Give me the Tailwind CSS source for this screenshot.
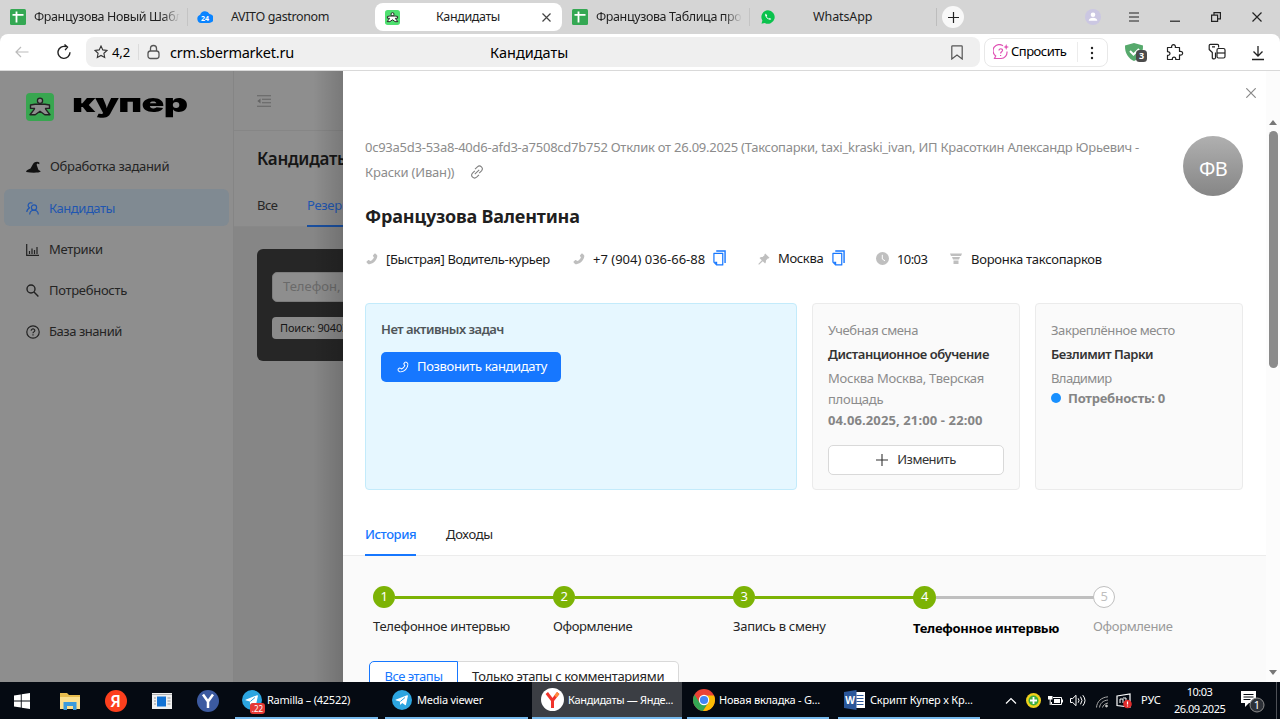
<!DOCTYPE html>
<html lang="ru">
<head>
<meta charset="utf-8">
<title>Кандидаты</title>
<script src="https://cdn.jsdelivr.net/npm/@tailwindcss/browser@4"></script>
</head>
<body class="w-[1280px] h-[719px] overflow-hidden font-['Noto_Sans','Open_Sans',sans-serif] text-[13px] tracking-[-0.3px] text-[#262626] whitespace-nowrap flex flex-col bg-[#d5d5d5]">
<svg class="hidden">
  <symbol id="sheet" viewBox="0 0 16 16"><rect width="16" height="16" rx="1.5" fill="#34a853"/><path d="M2.500 5.800h11M6.500 2.500v11" stroke="#fff" stroke-width="1.800"/></symbol>
  <symbol id="man" viewBox="0 0 28 28"><rect width="28" height="28" rx="5" fill="#4fe070"/><circle cx="14" cy="7.800" r="2.800" fill="#fff" stroke="#222" stroke-width="1.800"/><path d="m4.500 12 4.500-.7h10l4.500.7v3.400h-4l.3 1 4.200 5.300h-5.200L14 18.200l-4.800 3.500H4l4.200-5.300.3-1h-4z" fill="#fff" stroke="#222" stroke-width="1.800" stroke-linejoin="round"/></symbol>
  <symbol id="phone" viewBox="0 0 14 14"><path d="M9.800.8c.4-.4 1-.4 1.400 0l1.500 1.500c.4.500.6 1 .5 1.600C12.600 8.600 9 12.300 4 13.200c-.7.100-1.200-.1-1.600-.5L.8 11.200c-.4-.4-.4-1 0-1.400l1.600-1.400c.4-.3.900-.3 1.300 0l1.500 1c1.800-.8 3.300-2.300 4.100-4.100l-1-1.500c-.3-.4-.3-.9 0-1.300z"/></symbol>
  <symbol id="copy" viewBox="0 0 14 17"><path d="M3.500 1h9.500v13" fill="none" stroke="#1677ff" stroke-width="1.500"/><path d="M1 3.500h9.500v12.500H4L1 13z" fill="#fff" stroke="#1677ff" stroke-width="1.300" stroke-linejoin="round"/><path d="M1.500 12.500H4.500V16z" fill="#1677ff"/></symbol>
  <symbol id="tg" viewBox="0 0 20 20"><circle cx="10" cy="10" r="10" fill="#2ca5e0"/><path d="M3.500 9.800 15 5.200c.6-.2 1 .1.900.8l-1.900 8.700c-.1.600-.6.700-1 .4l-2.800-2-1.500 1.400c-.3.300-.6.200-.6-.2l-.2-2.700-3.600-1c-.9-.2-.8-.6-.8-.8z" fill="#fff"/><path d="m8.300 11.500 4.700-4" stroke="#2ca5e0" stroke-width="1"/></symbol>
</svg>

<!-- Tab strip -->
<div class="h-[34px] flex items-center text-[12.500px] text-[#1f1f1f] shrink-0">
  <svg class="w-4 h-4 ml-[10px]"><use href="#sheet"/></svg>
  <div class="ml-2 w-[146px] overflow-hidden tracking-[-0.38px] [mask-image:linear-gradient(90deg,#000_88%,transparent)]">Французова Новый Шабл</div>
  <div class="w-px h-[18px] ml-[7px] bg-[#c4c4c4]"></div>
  <svg class="w-4 h-4 ml-[9px]" viewBox="0 0 16 16"><path d="M4 14a4.300 4.300 0 0 1-.8-8.300 5 5 0 0 1 9.300-.7A4.500 4.500 0 0 1 12 14z" fill="#0a84ff"/><text x="8" y="11.500" font-size="7" font-weight="700" fill="#fff" text-anchor="middle" letter-spacing="0">24</text></svg>
  <div class="ml-[18px] w-[144px] tracking-[-0.37px]">AVITO gastronom</div>
  <div class="w-[187px] h-[28px] bg-white rounded-[8px] flex items-center">
    <svg class="w-[15px] h-[15px] ml-[10px]"><use href="#man"/></svg>
    <div class="ml-[36px] w-[106px] tracking-[-0.38px]">Кандидаты</div>
    <svg class="w-[9px] h-[9px]" viewBox="0 0 9 9" stroke="#444" stroke-width="1.200"><path d="m.5.5 8 8m0-8-8 8"/></svg>
  </div>
  <svg class="w-4 h-4 ml-[10px]"><use href="#sheet"/></svg>
  <div class="ml-2 w-[146px] overflow-hidden tracking-[-0.38px] [mask-image:linear-gradient(90deg,#000_88%,transparent)]">Французова Таблица про</div>
  <div class="w-px h-[18px] ml-[7px] bg-[#c4c4c4]"></div>
  <svg class="w-[14px] h-[14px] ml-[11px]" viewBox="0 0 14 14"><path d="M7 .3A6.700 6.700 0 1 1 3.800 12.900L.5 13.700l.9-3.200A6.700 6.700 0 0 1 7 .3z" fill="#0bc24d"/><path d="M4.900 3.600c-1.500 1-.6 3 .9 4.500s3.600 2.500 4.500.9l-1.600-1-.8.800C6.800 8.300 6 7.500 5.500 6.500l.7-.8z" fill="#fff"/></svg>
  <div class="ml-[38px] w-[123px] tracking-[-0.1px]">WhatsApp</div>
  <div class="w-px h-[18px] bg-[#bdbdbd]"></div>
  <div class="w-[22px] h-[22px] ml-[5px] rounded-full bg-[#f8f8f8] flex items-center justify-center"><svg class="w-[11px] h-[11px]" viewBox="0 0 11 11" stroke="#222" stroke-width="1.200"><path d="M5.500 0v11M0 5.500h11"/></svg></div>
  <svg class="w-4 h-4 ml-[121px]" viewBox="0 0 16 16"><circle cx="8" cy="8" r="8" fill="#cbc7e2"/><circle cx="8" cy="5.700" r="2.300" fill="#fff"/><path d="M3.700 11.800c0-4 8.600-4 8.600 0z" fill="#fff"/></svg>
  <svg class="w-[10px] h-[10px] ml-[28px]" viewBox="0 0 10 10" stroke="#222" stroke-width="1.200"><path d="M0 1h10M0 5h10M0 9h10"/></svg>
  <svg class="w-[10px] h-[10px] ml-[31px]" viewBox="0 0 10 10" stroke="#222" stroke-width="1.200"><path d="M0 9.200h10"/></svg>
  <svg class="w-[10px] h-[10px] ml-[31px]" viewBox="0 0 10 10" fill="none" stroke="#222" stroke-width="1.200"><path d="M.6 3.200h6v6.200h-6zM3 3V.6h6.400v6.200H7"/></svg>
  <svg class="w-[10px] h-[10px] ml-[31px]" viewBox="0 0 10 10" stroke="#222" stroke-width="1.200"><path d="m.5.5 9 9m0-9-9 9"/></svg>
</div>

<!-- Address bar -->
<div class="h-[37px] bg-white rounded-t-[8px] flex items-center border-b border-[#d9d9d9] text-black shrink-0">
  <svg class="w-[14px] h-[12px] ml-[15px]" viewBox="0 0 14 12" fill="none" stroke="#bbb" stroke-width="1.200"><path d="M13.500 6H1m5-5L1 6l5 5"/></svg>
  <svg class="w-[16px] h-[16px] ml-[27px]" viewBox="0 0 16 16" fill="none" stroke="#222" stroke-width="1.400"><path d="M14 8.300A6 6 0 1 1 10 2.700M8.500.5l3 2.600-2.400 3"/></svg>
  <div class="ml-[14px] w-[894px] h-[30px] rounded-[8px] bg-[#efefef] flex items-center">
    <svg class="w-[14px] h-[14px] ml-[8px]" viewBox="0 0 14 14" fill="none" stroke="#333" stroke-width="1.100"><path d="m7 1 1.800 3.900 4.200.5-3.100 2.900.8 4.200L7 10.400l-3.700 2.100.8-4.200L1 5.400l4.200-.5z"/></svg>
    <div class="ml-[4px] w-[26px] pt-[2px] tracking-[-0.1px]">4,2</div>
    <div class="w-px h-4 bg-[#dcdcdc]"></div>
    <svg class="w-[13px] h-[16px] ml-[8px]" viewBox="0 0 13 16" fill="none" stroke="#555" stroke-width="1.300"><rect x="1" y="7" width="11" height="7.500" rx="2.500"/><path d="M3.500 7V4.500a3 3 0 0 1 6 0V7"/></svg>
    <div class="ml-[10px] pt-[1px] text-[14.500px] w-[320px] tracking-[-0.25px]">crm.sbermarket.ru</div>
    <div class="text-[14.500px] pt-[1px] tracking-[0px] w-[461px]">Кандидаты</div>
    <svg class="w-[12px] h-[15px]" viewBox="0 0 12 15" fill="none" stroke="#555" stroke-width="1.200"><path d="M.8 1.500q0-.7.700-.7h9q.7 0 .7.700V14L6 10 .8 14z"/></svg>
  </div>
  <div class="ml-[4px] w-[124px] h-[29px] rounded-[8px] border border-[#e8e8e8] flex items-center shrink-0">
    <svg class="w-[16px] h-[16px] ml-[8px]" viewBox="0 0 16 16" fill="none" stroke="#e052b4" stroke-width="1.200"><path d="M10 1.700A6.300 6.300 0 0 0 2.700 12L1.500 14.500H8A6.300 6.300 0 0 0 14 7.500"/><path d="M6 6.500c0-2.400 3.800-2.200 3.500 0-.2 1.300-1.900 1.400-1.900 3M7.600 11v.9"/><path d="M13.200 0 14 2.300l2 .7-2 .8-.8 2.200-.8-2.200-2-.8 2-.7z" fill="#e052b4" stroke="none"/></svg>
    <div class="ml-[2px] w-[66px] text-[13px] tracking-[-0.5px]">Спросить</div>
    <div class="w-px h-5 bg-[#ececec]"></div>
    <svg class="w-[4px] h-[14px] ml-[12px] mt-[2px]" viewBox="0 0 4 14" fill="#222"><circle cx="2" cy="2" r="1.200"/><circle cx="2" cy="7" r="1.200"/><circle cx="2" cy="12" r="1.200"/></svg>
  </div>
  <svg class="w-[24px] h-[21px] ml-[16px] shrink-0" viewBox="0 0 24 21"><path d="M1 3.500 10 1l9 2.500c.3 8-3.500 13-9 15.500C4.500 16.500.7 11.500 1 3.500z" fill="#56a96c"/><path d="m6 9 3.500 3.500L15 7" stroke="#fff" stroke-width="2" fill="none"/><rect x="12" y="8" width="11" height="12" rx="3.500" fill="#4b4b4b"/><text x="17.500" y="17.300" font-size="9" font-weight="700" fill="#fff" text-anchor="middle" letter-spacing="0">3</text></svg>
  <svg class="w-[18px] h-[18px] ml-[18px] shrink-0" viewBox="0 0 18 18" fill="none" stroke="#222" stroke-width="1.200" stroke-linejoin="round"><path d="M1.500 4.500h4.200c-1-3.800 4.600-3.800 3.600 0h4.200v4c4.200-1 4.200 4.400 0 3.400v4.600H9.700c.7-3.300-4-3.300-3.300 0H1.500v-4.200c3.300.4 3.300-3.800 0-3.600z"/></svg>
  <svg class="w-[18px] h-[18px] ml-[24px] shrink-0" viewBox="0 0 18 18" fill="none" stroke="#222" stroke-width="1.200" stroke-linejoin="round"><path d="M7.500 9.500v5.500q-1.500 2-3.200 0V9.500L1.200 6.500V2.500q0-1.200 1.200-1.200h7q1.200 0 1.200 1.200V4.500M4 3.800h3"/><rect x="9" y="5.500" width="8" height="9.500" rx="1.500"/><path d="M9 10h8"/></svg>
  <svg class="w-[14px] h-[16px] ml-[25px] mt-[2px] shrink-0" viewBox="0 0 14 16" fill="none" stroke="#222" stroke-width="1.300"><path d="M7 1v9.500M2.500 6.500 7 11l4.500-4.500M1 14.500h12"/></svg>
</div>

<!-- Page -->
<div class="h-[611px] flex shrink-0">
  <aside class="w-[234px] bg-[#8e8e8e] border-r border-[#858585] shrink-0 text-[#242424]">
    <div class="h-[75px] flex items-start pt-[22px] pl-[26px]">
      <svg class="w-[28px] h-[28px]" viewBox="0 0 28 28"><rect width="28" height="28" rx="4" fill="#38a650"/><circle cx="14" cy="7.800" r="2.600" fill="#8e8e8e" stroke="#222" stroke-width="1.300"/><path d="m4.500 12 4.500-.7h10l4.500.7v3.400h-4l.3 1 4.200 5.300h-5.200L14 18.200l-4.800 3.500H4l4.200-5.300.3-1h-4z" fill="#8e8e8e" stroke="#222" stroke-width="1.400" stroke-linejoin="round"/></svg>
      <div class="ml-[18px] -mt-[6px] font-['Inter',sans-serif] font-black text-[26px] leading-[32px] tracking-[-0.500px] text-black origin-left scale-x-[1.45]">купер</div>
    </div>
    <div class="flex flex-col gap-[4px] px-[4px]">
      <div class="h-[37px] mt-[2px] pt-px flex items-center pl-[22px]">
        <svg class="w-[15px] h-[12px]" viewBox="0 0 15 12" fill="#111"><path d="M4.500 7.500 7 3c1.500-2.500 5-3 6.500-1.200l-.3 1.400-2-.7-.6 1.200 1.700 4.800c.5 1.500 2.200.8 2.400 2-1.500 1.400-9 1.500-14.400.5-.8-1 1.400-2.500 4.200-3.500z"/></svg>
        <span class="ml-[9px]">Обработка заданий</span>
      </div>
      <div class="h-[37px] pt-[2px] flex items-center pl-[22px] rounded-[6px] bg-[#808a92] text-[#1f56b0]">
        <svg class="w-[13px] h-[13px]" viewBox="0 0 13 13" fill="none" stroke="#1f56b0" stroke-width="1.200"><circle cx="8" cy="5.500" r="2.600"/><path d="M3.700 12.500c.2-5.700 8.400-5.700 8.600 0M6.500 1.300A2.700 2.700 0 1 0 4 6M.8 10c.1-2 1-3.300 2.600-3.900"/></svg>
        <span class="ml-[10px] tracking-[-0.45px]">Кандидаты</span>
      </div>
      <div class="h-[37px] pt-[2px] flex items-center pl-[22px]">
        <svg class="w-[13px] h-[12px]" viewBox="0 0 13 12" fill="none" stroke="#222" stroke-width="1.200"><path d="M.7 0v11.300H13M3.500 10V7m2.500 3V4.500M8.500 10V6M11 10V3"/></svg>
        <span class="ml-[10px] tracking-[-0.3px]">Метрики</span>
      </div>
      <div class="h-[37px] pt-[2px] flex items-center pl-[22px]">
        <svg class="w-[13px] h-[13px]" viewBox="0 0 13 13" fill="none" stroke="#222" stroke-width="1.400"><circle cx="5" cy="5" r="4"/><path d="m8 8 4.400 4.400"/></svg>
        <span class="ml-[10px]">Потребность</span>
      </div>
      <div class="h-[37px] pt-[2px] flex items-center pl-[22px]">
        <svg class="w-[14px] h-[14px]" viewBox="0 0 14 14" fill="none" stroke="#222" stroke-width="1.200"><circle cx="7" cy="7" r="6.200"/><path d="M5.200 5.700c0-2.400 3.700-2.300 3.600 0-.1 1.200-1.800 1.200-1.800 2.500M7 9.300v1.200"/></svg>
        <span class="ml-[9px] tracking-[-0.45px]">База знаний</span>
      </div>
    </div>
  </aside>

  <main class="w-[109px] bg-[#868686] overflow-hidden shrink-0 relative">
    <div class="h-[60px] bg-[#8e8e8e] border-b border-[#868686] flex items-center pl-[23px]">
      <svg class="w-[14px] h-[12px]" viewBox="0 0 14 12" fill="none" stroke="#646464" stroke-width="1.100"><path d="M0 .8h14M5 4.300h9M5 7.800h9M0 11.200h14"/><path d="M3.500 3.500v5L.3 6z" fill="#646464" stroke="none"/></svg>
    </div>
    <div class="h-[96px] bg-[#8e8e8e] pl-[23px] border-b border-[#888]">
      <div class="h-[54px] pt-px flex items-center text-[17px] font-semibold tracking-[-0.3px] text-[#161616]">Кандидаты</div>
      <div class="flex h-[42px]">
        <div class="w-[50px] h-[42px] leading-[40px] shrink-0 tracking-[-0.5px]">Все</div>
        <div class="h-[42px] leading-[40px] border-b-2 border-[#1a4f9e] text-[#1f56b0]">Резерв</div>
      </div>
    </div>
    <div class="ml-[23px] mt-[22px] w-[200px] h-[112px] rounded-[6px] bg-[#262626] pl-[15px] pt-[23px]">
      <div class="h-[30px] rounded-[5px] bg-[#8e8e8e] border border-[#7d7d7d] pl-[10px] flex items-center text-[#6a6a6a] tracking-normal">Телефон, ФИО</div>
      <div class="mt-[15px] h-[22px] rounded-[4px] bg-[#8a8a8a] pl-[8px] flex items-center text-[11px] tracking-[-0.150px] text-[#161616]">Поиск: 9040366688</div>
    </div>
    <div class="absolute inset-y-0 right-0 w-[30px] bg-linear-to-r from-transparent to-black/15"></div>
  </main>

  <!-- Candidate drawer -->
  <section class="w-[937px] bg-white flex shrink-0">
    <div class="w-[923px] h-[611px] overflow-hidden pt-[64px]">
      <div class="flex pl-[22px]">
        <div class="w-[818px]">
          <div class="leading-[25px] text-[#8c8c8c] tracking-[-0.25px]">0c93a5d3-53a8-40d6-afd3-a7508cd7b752 Отклик от 26.09.2025 (Таксопарки, taxi_kraski_ivan, ИП Красоткин Александр Юрьевич -</div>
          <div class="leading-[25px] text-[#8c8c8c] flex items-center"><span class="tracking-[-0.2px]">Краски (Иван))</span>
            <svg class="w-[14px] h-[14px] ml-[16px] -mt-[2px]" viewBox="0 0 14 14" fill="none" stroke="#808080" stroke-width="1.100"><path d="M5 4.200 7.400 1.800c2.700-2.500 6.600 1.200 4.100 4L9.200 8.100M9 9.800l-2.400 2.400C3.900 14.700 0 11 2.500 8.200l2.300-2.300M4.800 9.200l4.400-4.400"/></svg></div>
        </div>
        <div class="w-[60px] h-[60px] mt-[1px] rounded-full bg-linear-to-b from-[#b0b0b0] to-[#868686] flex items-center justify-center text-white text-[20px] tracking-[-0.67px] pt-[5px]">ФВ</div>
      </div>
      <div class="pl-[22px] h-[40px] flex items-center text-[18px] font-bold tracking-[-0.2px] text-[#1f1f1f]">Французова Валентина</div>
      <div class="pl-[23px] h-[28px] mt-[9px] flex items-center text-[#1a1a1a]">
        <svg class="w-[12px] h-[12px] -mt-px shrink-0" fill="#bfbfbf" viewBox="0 0 14 14"><use href="#phone"/></svg>
        <span class="ml-[8px] w-[187px] pt-px tracking-[-0.34px]">[Быстрая] Водитель-курьер</span>
        <svg class="w-[12px] h-[12px] -mt-px shrink-0" fill="#bfbfbf" viewBox="0 0 14 14"><use href="#phone"/></svg>
        <span class="ml-[8px] w-[120px] pt-px tracking-[0px]">+7 (904) 036-66-88</span>
        <svg class="w-[13px] h-[16px] -mt-[3px] shrink-0"><use href="#copy"/></svg>
        <svg class="w-[12px] h-[12px] ml-[32px] shrink-0" viewBox="0 0 12 12" fill="#bfbfbf"><path d="m7.200.5 4.300 4.300-1 .8-.7-.1-1.900 2c.2 1.200 0 2.100-.8 3L4.800 8.200 1 11.700l-.7-.7L3.800 7.200 1.500 4.900c.9-.8 1.800-1 3-.8l2-1.900-.1-.7z"/></svg>
        <span class="ml-[8px] w-[54px] tracking-[-0.35px]">Москва</span>
        <svg class="w-[13px] h-[16px] -mt-[3px] shrink-0"><use href="#copy"/></svg>
        <svg class="w-[13px] h-[13px] ml-[31px] -mt-px shrink-0" viewBox="0 0 13 13"><circle cx="6.500" cy="6.500" r="6.500" fill="#bfbfbf"/><path d="M6.300 2.800v4.200L9 8.800" stroke="#fff" fill="none"/></svg>
        <span class="ml-[8px] w-[53px] pt-px tracking-[-0.6px]">10:03</span>
        <svg class="w-[12px] h-[12px] shrink-0" viewBox="0 0 12 12" fill="#bfbfbf"><path d="M0 .5h12L11 3H1zM2 4h8L9 6.500H3zM3.500 7.500h5V11h-5z"/></svg>
        <span class="ml-[9px] pt-px tracking-[-0.25px]">Воронка таксопарков</span>
      </div>

      <div class="pl-[22px] mt-[30px] flex gap-[15px]">
        <div class="w-[432px] h-[187px] rounded-[4px] bg-[#e6f7ff] border border-[#c3ebfb] pl-[15px] pt-[15px]">
          <div class="h-[20px] leading-[20px] font-semibold text-[#4f5559] tracking-[-0.5px]">Нет активных задач</div>
          <div class="mt-[13px] w-[180px] h-[30px] rounded-[5px] bg-[#1677ff] flex items-center pl-[16px] text-white">
            <svg class="w-[12px] h-[12px]" viewBox="-.5 -.5 15 15" fill="none" stroke="#fff" stroke-width="1.300"><use href="#phone" width="14" height="14"/></svg>
            <span class="ml-[8px] tracking-[-0.35px]">Позвонить кандидату</span>
          </div>
        </div>
        <div class="w-[208px] h-[187px] rounded-[4px] bg-[#fafafa] border border-[#ebebeb] px-[15px] pt-[15px] text-[#8c8c8c]">
          <div class="leading-[22px] tracking-[-0.4px]">Учебная смена</div>
          <div class="leading-[27px] font-semibold text-[#333] tracking-[-0.4px]">Дистанционное обучение</div>
          <div class="leading-[21px] tracking-[-0.26px]">Москва Москва, Тверская<br>площадь</div>
          <div class="leading-[20px] font-bold tracking-[0.12px] text-[#858585]">04.06.2025, 21:00 - 22:00</div>
          <div class="mt-[15px] h-[30px] rounded-[5px] border border-[#d9d9d9] bg-white flex items-center justify-center text-[#333]">
            <svg class="w-[12px] h-[12px]" viewBox="0 0 12 12" stroke="#333" stroke-width="1.100"><path d="M6 0v12M0 6h12"/></svg>
            <span class="ml-[9px] tracking-[-0.5px]">Изменить</span>
          </div>
        </div>
        <div class="w-[208px] h-[187px] rounded-[4px] bg-[#fafafa] border border-[#ebebeb] px-[15px] pt-[15px] text-[#8c8c8c]">
          <div class="leading-[22px] tracking-[-0.38px]">Закреплённое место</div>
          <div class="leading-[27px] font-semibold text-[#333] tracking-[-0.5px]">Безлимит Парки</div>
          <div class="leading-[20px] tracking-[-0.6px]">Владимир</div>
          <div class="leading-[20px] font-bold tracking-[-0.24px] text-[#858585] flex items-center"><i class="w-[10px] h-[10px] rounded-full bg-[#1890ff] mr-[7px]"></i>Потребность: 0</div>
        </div>
      </div>

      <div class="mt-[24px] h-[42px] pl-[22px] flex gap-[30px] border-b border-[#ececec]">
        <div class="w-[51px] h-[42px] leading-[41px] border-b-2 border-[#1677ff] text-[#1677ff] font-medium tracking-[-0.45px]">История</div>
        <div class="leading-[41px]">Доходы</div>
      </div>

      <div class="bg-[#fafafa] h-[128px] pt-[30px] overflow-hidden">
        <div class="pl-[30px] flex">
          <div class="w-[180px]">
            <div class="flex items-center h-[22px]"><span class="w-[22px] h-[22px] rounded-full bg-[#7cb305] text-white flex items-center justify-center shrink-0">1</span><i class="h-[3px] -mr-px grow bg-[#7cb305]"></i></div>
            <div class="mt-[8px] leading-[20px] tracking-[-0.27px]">Телефонное интервью</div>
          </div>
          <div class="w-[180px]">
            <div class="flex items-center h-[22px]"><span class="w-[22px] h-[22px] rounded-full bg-[#7cb305] text-white flex items-center justify-center shrink-0">2</span><i class="h-[3px] -mr-px grow bg-[#7cb305]"></i></div>
            <div class="mt-[8px] leading-[20px] tracking-[-0.38px]">Оформление</div>
          </div>
          <div class="w-[180px]">
            <div class="flex items-center h-[22px]"><span class="w-[22px] h-[22px] rounded-full bg-[#7cb305] text-white flex items-center justify-center shrink-0">3</span><i class="h-[3px] -mr-px grow bg-[#7cb305]"></i></div>
            <div class="mt-[8px] leading-[20px] tracking-[-0.27px]">Запись в смену</div>
          </div>
          <div class="w-[180px]">
            <div class="flex items-center h-[22px]"><span class="w-[23px] h-[23px] rounded-full bg-[#7cb305] text-white flex items-center justify-center shrink-0">4</span><i class="h-[3px] -mr-px grow bg-[#bfbfbf]"></i></div>
            <div class="mt-[10px] leading-[20px] tracking-[-0.26px] font-bold text-black">Телефонное интервью</div>
          </div>
          <div class="w-[100px]">
            <div class="flex items-center h-[22px]"><span class="w-[22px] h-[22px] rounded-full border border-[#bfbfbf] bg-white text-[#bfbfbf] flex items-center justify-center shrink-0">5</span></div>
            <div class="mt-[8px] leading-[20px] tracking-[-0.35px] text-[#9a9a9a]">Оформление</div>
          </div>
        </div>
        <div class="mt-[23px] ml-[26px] flex h-[30px]">
          <div class="w-[89px] rounded-l-[5px] border border-[#1677ff] bg-white text-[#1677ff] text-center leading-[28px] tracking-[-0.5px]">Все этапы</div>
          <div class="w-[221px] rounded-r-[5px] border border-l-0 border-[#d9d9d9] bg-white pl-[14px] leading-[28px] tracking-[-0.34px]">Только этапы с комментариями</div>
        </div>
      </div>
    </div>
    <div class="w-[14px] bg-[#fcfcfc] flex flex-col items-center">
      <div class="h-[48px] flex items-center -ml-[44px] -mt-[2px]"><svg class="w-[10px] h-[10px]" viewBox="0 0 10 10" stroke="#888" stroke-width="1.200"><path d="m.3.300 9.400 9.400m0-9.400-9.400 9.400"/></svg></div>
      <svg class="w-[8px] h-[5px] mt-[3px]" viewBox="0 0 8 5" fill="#777"><path d="M4 0l4 5H0z"/></svg>
      <div class="mt-[6px] w-[9px] h-[237px] rounded-full bg-[#8b8b8b]"></div>
      <svg class="w-[8px] h-[5px] mt-auto mb-[7px]" viewBox="0 0 8 5" fill="#777"><path d="M4 5l4-5H0z"/></svg>
    </div>
  </section>
</div>

<!-- Taskbar -->
<footer class="h-[37px] bg-[#050a12] flex items-center text-white text-[11px] tracking-[-0.22px] shrink-0">
  <svg class="w-[16px] h-[16px] ml-[14px]" viewBox="0 0 16 16" fill="#fff"><path d="M0 2.500 6.800 1.500v6H0zM7.700 1.300 16 0v7.500H7.700zM0 8.400h6.800v6.100L0 13.500zM7.700 8.400H16V16l-8.300-1.300z"/></svg>
  <svg class="w-[20px] h-[18px] ml-[30px]" viewBox="0 0 20 18"><path d="M0 1h7l2 2h11v14H0z" fill="#e8bd4d"/><path d="M0 5h20v12H0z" fill="#fbe08e"/><path d="M3.500 10h13v8H13v-4H7v4H3.500z" fill="#3a9bdc"/></svg>
  <svg class="w-[22px] h-[22px] ml-[25px]" viewBox="0 0 22 22"><circle cx="11" cy="11" r="11" fill="#fc3f1d"/><text x="10.500" y="17" font-size="16" font-weight="600" fill="#fff" text-anchor="middle" letter-spacing="0">Я</text></svg>
  <svg class="w-[20px] h-[16px] ml-[25px]" viewBox="0 0 20 16"><rect width="20" height="16" fill="#f0f0f0"/><path d="M0 1.500h20" stroke="#b0b0b0"/><rect x="5" y="3.500" width="9" height="10" fill="#1272d4"/><path d="M2 5h2M2 8h2M2 11h2M15.500 5h3M15.500 8h3M15.500 11h3" stroke="#999"/></svg>
  <svg class="w-[22px] h-[22px] ml-[25px]" viewBox="0 0 22 22"><circle cx="11" cy="11" r="11" fill="#3c5aa0"/><path d="m6 4.500 5 7 5-7M11 11v7" fill="none" stroke="#fff" stroke-width="2.500"/></svg>
  <div class="relative ml-[16px] w-[143px] h-[37px] border-b-2 border-[#76b9ed] flex items-center pl-[7px]">
    <svg class="w-[20px] h-[20px]"><use href="#tg"/></svg>
    <span class="absolute left-[15px] top-[21px] w-[15px] h-[11px] rounded-[3px] bg-[#e53935] text-[8px] leading-[11px] text-center tracking-[0]">.22</span>
    <span class="ml-[5px] pt-px tracking-[-0.25px]">Ramilla – (42522)</span>
  </div>
  <div class="ml-[7px] w-[143px] h-[37px] border-b-2 border-[#76b9ed] flex items-center pl-[7px]">
    <svg class="w-[20px] h-[20px]"><use href="#tg"/></svg>
    <span class="ml-[5px] pt-px">Media viewer</span>
  </div>
  <div class="ml-[4px] w-[150px] h-[37px] bg-[#3b3e44] border-b-2 border-[#76b9ed] flex items-center pl-[9px]">
    <svg class="w-[23px] h-[23px]" viewBox="0 0 23 23"><circle cx="11.500" cy="11.500" r="11.500" fill="#fff"/><path d="m5.800 5 5.700 7.500L17.200 5" fill="none" stroke="#f0332b" stroke-width="3"/><path d="M11.500 11.500V20" stroke="#f0332b" stroke-width="3"/><path d="m14.500 8.500 2.700-3.500" stroke="#ff8a3c" stroke-width="3"/></svg>
    <span class="ml-[4px] pt-px tracking-[-0.33px]">Кандидаты — Янде...</span>
  </div>
  <div class="ml-[5px] w-[142px] h-[37px] border-b-2 border-[#76b9ed] flex items-center pl-[6px]">
    <svg class="w-[22px] h-[22px]" viewBox="0 0 22 22"><circle cx="11" cy="11" r="11" fill="#ea4335"/><path d="M1.500 5.500A11 11 0 0 0 10 22l5.500-8.500-9 0z" fill="#34a853"/><path d="M21 6.500A11 11 0 0 1 10 22l5.500-8.500L13 6.500z" fill="#fbbc04"/><circle cx="11" cy="11" r="5.200" fill="#fff"/><circle cx="11" cy="11" r="4.100" fill="#4285f4"/></svg>
    <span class="ml-[4px] pt-px">Новая вкладка - G...</span>
  </div>
  <div class="ml-[9px] w-[142px] h-[37px] border-b-2 border-[#76b9ed] flex items-center pl-[6px]">
    <svg class="w-[21px] h-[20px]" viewBox="0 0 21 20"><rect x="10" y="2" width="11" height="16" fill="#fff"/><path d="M12.500 5.500h7M12.500 8.500h7M12.500 11.500h7M12.500 14.500h7" stroke="#2b579a"/><path d="M0 2 12.500 0v20L0 18z" fill="#2b579a"/><text x="6.200" y="13.800" font-size="10" font-weight="700" fill="#fff" text-anchor="middle" letter-spacing="0">W</text></svg>
    <span class="ml-[5px] pt-px tracking-[-0.19px]">Скрипт Купер х Кр...</span>
  </div>
  <svg class="w-[12px] h-[8px] ml-[25px]" viewBox="0 0 12 8" fill="none" stroke="#fff" stroke-width="1.200"><path d="m1 6.500 5-5 5 5"/></svg>
  <svg class="w-[15px] h-[15px] ml-[9px]" viewBox="0 0 15 15"><circle cx="7.500" cy="7.500" r="7.500" fill="#f1d21b"/><circle cx="7.500" cy="7.500" r="5" fill="#3fae3f"/><path d="M7.500 4v7M4 7.500h7" stroke="#fff" stroke-width="1.800"/></svg>
  <svg class="w-[15px] h-[12px] ml-[7px]" viewBox="0 0 15 12"><path d="M5 2.500h8.500v7H3.500V7" fill="none" stroke="#fff"/><path d="M6 4h6v4H6zM14 4.500h1v3h-1zM0 1h4.500v3.500H0z" fill="#fff"/><path d="M2.200 4v6" stroke="#fff"/></svg>
  <svg class="w-[16px] h-[13px] ml-[7px]" viewBox="0 0 16 13" fill="none" stroke="#fff"><path d="M.5 4.500h2.200L6 1.300v10.400L2.700 8.500H.5zM8.200 4.300q1.600 2.200 0 4.400M10.500 2.700q3 3.800 0 7.600M12.800 1.200q4.400 5.300 0 10.600"/></svg>
  <svg class="w-[13px] h-[12px] ml-[10px] mt-[3px]" viewBox="0 0 13 12" fill="none" stroke="#aaa"><path d="M.5 11.500C1 5.500 5 1.500 12 .8M3.500 11.500C4 7.500 7 4.500 12 4M6.500 11.500C7 9.500 9 7.500 12 7"/><circle cx="10.500" cy="10" r="1" fill="#fff"/></svg>
  <svg class="w-[16px] h-[16px] ml-[7px]" viewBox="0 0 16 16"><path d="M1 3 14 1v13l-13-1.500z" fill="none" stroke="#fff" stroke-width="1.200"/><path d="M4 10V6h3v4m0-5h3v3" fill="none" stroke="#fff"/><circle cx="11.500" cy="11" r="4.300" fill="#e02b2b"/><path d="M11.500 8.500v3M11.500 12.500v1" stroke="#fff" stroke-width="1.200"/></svg>
  <span class="ml-[9px] w-[33px] tracking-[0.05px]">РУС</span>
  <div class="w-[51px] text-center leading-[17px] -mt-[2px] tracking-[-0.5px]">10:03<br>26.09.2025</div>
  <svg class="w-[24px] h-[24px] ml-[16px]" viewBox="0 0 24 24"><path d="M0 2h15v12H8l-4 4v-4H0z" fill="#fff"/><path d="M2.500 5.500h10M2.500 8h10M2.500 10.500h7" stroke="#050a12"/><circle cx="16" cy="16" r="7" fill="#2c3037" stroke="#8d8d8d"/><text x="16" y="20" font-size="11" fill="#fff" text-anchor="middle" letter-spacing="0">1</text></svg>
  <i class="ml-[11px] w-px h-[37px] bg-[#4d5056]"></i>
</footer>
</body>
</html>
